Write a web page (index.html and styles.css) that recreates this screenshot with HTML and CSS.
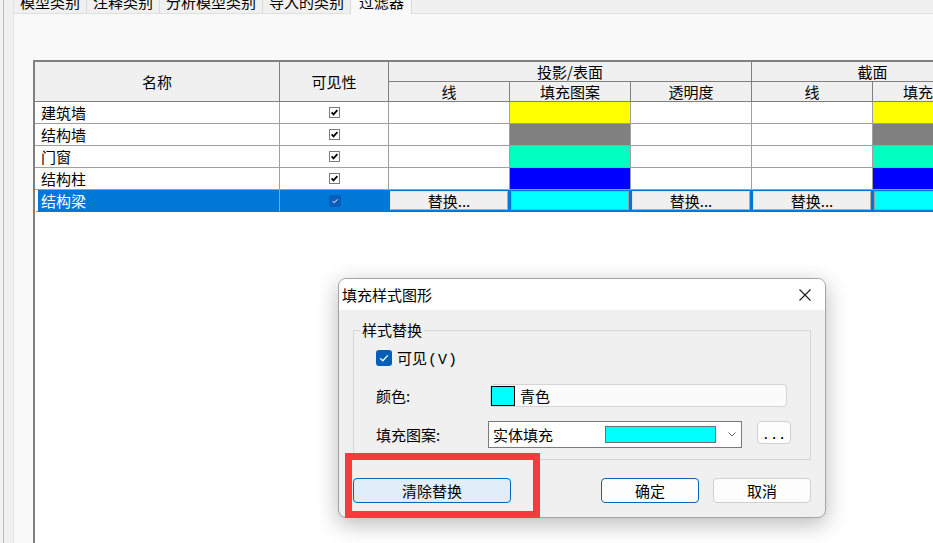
FILE: index.html
```html
<!DOCTYPE html>
<html lang="zh-CN">
<head>
  <meta charset="UTF-8" />
  <title>可见性/图形替换 - 过滤器</title>
  <link rel="stylesheet" href="styles.css">
</head>
<body>
  <div class="window">
    <div class="rail"></div>
    <div class="side"></div>
    <div class="main">
      <!-- tab strip, top is cut off by the window -->
      <div class="tabs">
        <div class="tab">模型类别</div>
        <div class="tab">注释类别</div>
        <div class="tab">分析模型类别</div>
        <div class="tab">导入的类别</div>
        <div class="tab active">过滤器</div>
      </div>

      <div class="panel">
        <div class="table">
          <div class="grid">
            <div class="hd hd-tall">名称</div>
            <div class="hd hd-tall">可见性</div>
            <div class="hd span3">投影/表面</div>
            <div class="hd span2">截面</div>
            <div class="hd">线</div>
            <div class="hd">填充图案</div>
            <div class="hd">透明度</div>
            <div class="hd">线</div>
            <div class="hd">填充图案</div>

            <div class="row">
              <div class="name">建筑墙</div>
              <div class="vis"><svg class="cb" width="11" height="11" viewBox="0 0 11 11"><rect x="0.5" y="0.5" width="10" height="10" fill="#fff" stroke="#7a7a7a"/><path d="M2.6 5.4 L4.5 7.4 L8.4 3.2" fill="none" stroke="#000" stroke-width="1.7"/></svg></div>
              <div></div>
              <div class="yellow"></div>
              <div></div>
              <div></div>
              <div class="yellow"></div>
            </div>

            <div class="row">
              <div class="name">结构墙</div>
              <div class="vis"><svg class="cb" width="11" height="11" viewBox="0 0 11 11"><rect x="0.5" y="0.5" width="10" height="10" fill="#fff" stroke="#7a7a7a"/><path d="M2.6 5.4 L4.5 7.4 L8.4 3.2" fill="none" stroke="#000" stroke-width="1.7"/></svg></div>
              <div></div>
              <div class="gray"></div>
              <div></div>
              <div></div>
              <div class="gray"></div>
            </div>

            <div class="row">
              <div class="name">门窗</div>
              <div class="vis"><svg class="cb" width="11" height="11" viewBox="0 0 11 11"><rect x="0.5" y="0.5" width="10" height="10" fill="#fff" stroke="#7a7a7a"/><path d="M2.6 5.4 L4.5 7.4 L8.4 3.2" fill="none" stroke="#000" stroke-width="1.7"/></svg></div>
              <div></div>
              <div class="mint"></div>
              <div></div>
              <div></div>
              <div class="mint"></div>
            </div>

            <div class="row">
              <div class="name">结构柱</div>
              <div class="vis"><svg class="cb" width="11" height="11" viewBox="0 0 11 11"><rect x="0.5" y="0.5" width="10" height="10" fill="#fff" stroke="#7a7a7a"/><path d="M2.6 5.4 L4.5 7.4 L8.4 3.2" fill="none" stroke="#000" stroke-width="1.7"/></svg></div>
              <div></div>
              <div class="blue"></div>
              <div></div>
              <div></div>
              <div class="blue"></div>
            </div>

            <div class="row sel">
              <div class="name">结构梁</div>
              <div class="vis"><svg class="cb" width="12" height="12" viewBox="0 0 12 12"><rect x="0" y="0" width="12" height="12" rx="2" fill="#0a5cbd"/><path d="M3.6 6.2 L5.2 7.7 L8.4 4.4" fill="none" stroke="#fff" stroke-width="1"/></svg></div>
              <div><button class="cell-btn">替换...</button></div>
              <div><div class="cell-swatch"></div></div>
              <div><button class="cell-btn">替换...</button></div>
              <div><button class="cell-btn">替换...</button></div>
              <div><div class="cell-swatch"></div></div>
            </div>
          </div>
        </div>
      </div>
    </div>
  </div>

  <!-- 填充样式图形 dialog -->
  <div class="dialog">
    <div class="dlg-title">
      <span>填充样式图形</span>
      <svg width="12" height="12" viewBox="0 0 12 12"><path d="M0.5 0.5 L11.5 11.5 M11.5 0.5 L0.5 11.5" stroke="#1a1a1a" stroke-width="1.1"/></svg>
    </div>
    <div class="dlg-body">
      <fieldset class="group">
        <legend>样式替换</legend>
        <div class="group-body">
          <div class="check-row">
            <svg width="16" height="16" viewBox="0 0 16 16"><rect x="0" y="0" width="16" height="16" rx="3" fill="#005fb8"/><path d="M4.2 8.3 L6.8 10.8 L11.8 5.4" fill="none" stroke="#fff" stroke-width="1.3"/></svg>
            <span>可见<span class="key">(V)</span></span>
          </div>
          <div class="form-row color-row">
            <label class="lbl lbl-color">颜色:</label>
            <div class="field">
              <div class="field-swatch"></div>
              <span>青色</span>
            </div>
          </div>
          <div class="form-row fill-row">
            <label class="lbl lbl-fill">填充图案:</label>
            <div class="select">
              <span>实体填充</span>
              <div class="select-swatch"></div>
              <svg class="chev" width="8" height="5" viewBox="0 0 8 5"><path d="M0.5 0.5 L4 4 L7.5 0.5" fill="none" stroke="#606060" stroke-width="1"/></svg>
            </div>
            <button class="more">...</button>
          </div>
        </div>
      </fieldset>

      <div class="actions">
        <button class="btn btn-clear">清除替换</button>
        <button class="btn btn-ok">确定</button>
        <button class="btn">取消</button>
      </div>
    </div>
  </div>

  <div class="mark"></div>
</body>
</html>
```

FILE: styles.css
```css
* {
  box-sizing: border-box;
}
body {
  margin: 0;
  width: 933px;
  height: 543px;
  overflow: hidden;
  background: #f0f0f0;
  font-family: "Noto Sans CJK SC", "Noto Sans", sans-serif;
  font-size: 15px;
  color: #000;
}
button {
  font-family: inherit;
  font-size: 15px;
  color: #000;
  padding: 0;
}

.window {
  display: flex;
  height: 543px;
}
.rail {
  width: 4px;
  background: #f3f3f3;
  border-right: 1px solid #bdbdbd;
}
.side {
  width: 10px;
  background: #f0f0f0;
  border-right: 1px solid #e3e3e3;
}
.main {
  flex: 1;
  display: flex;
  flex-direction: column;
  min-width: 0;
}

/* tabs */
.tabs {
  display: flex;
  height: 14px;
  border-bottom: 1px solid #e0e0e0;
}
.tab {
  padding: 0 6px;
  margin-top: -8px;
  height: 21px;
  line-height: 20px;
  border-right: 1px solid #d9d9d9;
  white-space: nowrap;
}
.tab.active {
  background: #f9f9f9;
  height: 22px;
  padding: 0 7px 0 8px;
}

.panel {
  flex: 1;
  background: #f9f9f9;
  padding: 46px 0 0 19px;
  overflow: hidden;
  display: flex;
  flex-direction: column;
}

/* table */
.table {
  flex: 1;
  width: 961px;
  background: #fff;
  border-top: 2px solid #808080;
  border-left: 2px solid #808080;
}
.grid {
  display: grid;
  grid-template-columns: 245px 109px repeat(5, 121px);
  grid-template-rows: 20px 20px repeat(5, 22px);
}
.grid > div,
.row > div {
  border-right: 1px solid #a0a0a0;
  border-bottom: 1px solid #a0a0a0;
}
.row {
  display: contents;
}
.hd {
  background: #f0f0f0;
  border-color: #808080 !important;
  text-align: center;
  line-height: 20px;
  white-space: nowrap;
}
.hd-tall {
  grid-row: span 2;
  display: flex;
  align-items: center;
  justify-content: center;
}
.span3 {
  grid-column: span 3;
}
.span2 {
  grid-column: span 2;
}
.row .name {
  padding-left: 6px;
  line-height: 21px;
}
.row .vis {
  display: flex;
  align-items: center;
  justify-content: center;
}
.cb {
  display: block;
  margin-left: 1px;
}
.yellow { background: #ffff00; }
.gray { background: #808080; }
.mint { background: #00ffc0; }
.blue { background: #0000ff; }

.row.sel > div {
  background: #0078d7;
  border-color: #0078d7;
  padding: 1px 1px 1px 1px;
}
.row.sel > .name {
  color: #fff;
  border-left: 3px solid #fff;
  border-right-color: #a0a0a0;
  padding: 0 0 0 3px;
  line-height: 21px;
}
.cell-btn {
  display: block;
  width: 118px;
  height: 19px;
  background: #f0f0f0;
  border: 1px solid #adadad;
  border-top-color: #e3e3e3;
  border-left-color: #e3e3e3;
  line-height: 16px;
}
.cell-swatch {
  width: 118px;
  height: 19px;
  background: #00ffff;
  border: 1px solid #a0a0a0;
}

/* dialog */
.dialog {
  position: absolute;
  left: 338px;
  top: 278px;
  width: 488px;
  height: 240px;
  background: #f0f0f0;
  border: 1px solid #a3a3a3;
  border-radius: 8px;
  overflow: hidden;
  box-shadow: 0 6px 22px rgba(0, 0, 0, 0.28);
}
.dlg-title {
  height: 31px;
  background: #fff;
  display: flex;
  align-items: center;
  justify-content: space-between;
  padding: 0 14px 0 3px;
}
.dlg-body {
  padding: 10px 14px 0;
}
.group {
  margin: 0;
  padding: 0 0 11px 6px;
  border: 1px solid #d6d6d6;
  min-width: 0;
}
.group legend {
  padding: 0 2px;
  line-height: 20px;
}
.group-body {
  padding-left: 16px;
}
.check-row {
  display: flex;
  align-items: center;
  gap: 5px;
  height: 16px;
  margin-top: 10px;
}
.check-row svg {
  display: block;
}
.key {
  font-family: "Liberation Mono", monospace;
  letter-spacing: 1px;
  margin-left: 1px;
}
.form-row {
  display: flex;
  align-items: flex-start;
}
.color-row {
  margin-top: 18px;
}
.fill-row {
  margin-top: 14px;
}
.lbl {
  line-height: 23px;
}
.lbl-color {
  width: 114px;
}
.lbl-fill {
  width: 112px;
  line-height: 27px;
}
.field {
  width: 297px;
  height: 23px;
  background: #fbfbfb;
  border: 1px solid #d5d5d5;
  border-radius: 4px;
  display: flex;
  align-items: center;
}
.field-swatch {
  width: 24px;
  height: 20px;
  background: #00ffff;
  border: 1px solid #000;
  margin-right: 5px;
}
.select {
  width: 254px;
  height: 27px;
  background: #fff;
  border: 1px solid #7a7a7a;
  display: flex;
  align-items: center;
  padding-left: 4px;
}
.select-swatch {
  margin-left: auto;
  width: 111px;
  height: 17px;
  background: #00ffff;
  border: 1px solid #6f6f6f;
}
.chev {
  display: block;
  margin: 0 5px 0 12px;
}
.more {
  margin-left: 15px;
  width: 34px;
  height: 23px;
  background: #fdfdfd;
  border: 1px solid #d0d0d0;
  border-radius: 4px;
  letter-spacing: 4px;
  padding-left: 4px;
  line-height: 18px;
}

.actions {
  display: flex;
  gap: 14px;
  margin-top: 18px;
}
.btn {
  width: 98px;
  height: 25px;
  background: #fdfdfd;
  border: 1px solid #d0d0d0;
  border-radius: 4px;
}
.btn-clear {
  width: 158px;
  margin-right: auto;
  background: #e0eef9;
  border-color: #0067c0;
}
.btn-ok {
  border-color: #0067c0;
}

/* red highlight drawn over the screenshot */
.mark {
  position: absolute;
  left: 345px;
  top: 453px;
  width: 195px;
  height: 65px;
  border: 7px solid #f43c3c;
}
```
